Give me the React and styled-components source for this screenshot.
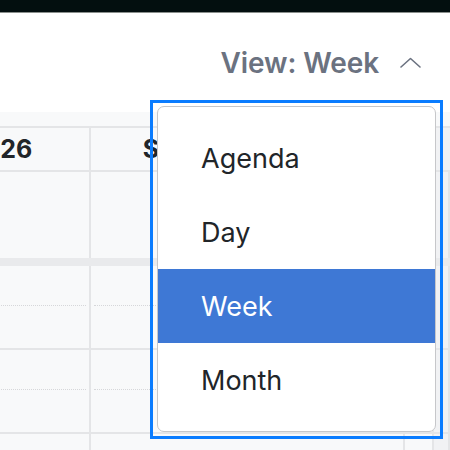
import React from "react";
import styled, { createGlobalStyle } from "styled-components";

const GlobalStyle = createGlobalStyle`
  html, body { margin: 0; padding: 0; }
  body {
    width: 450px;
    height: 450px;
    overflow: hidden;
    background: #ffffff;
    font-family: Inter, "Noto Sans", "Liberation Sans", sans-serif;
  }
  * { box-sizing: border-box; }
`;

const Page = styled.div`
  width: 450px;
  height: 450px;
  display: flex;
  flex-direction: column;
  overflow: hidden;
`;

const TopBar = styled.div`
  height: 13px;
  flex: none;
  background: #030f0f;
  border-bottom: 1px solid #8a8f8c;
`;

const Toolbar = styled.div`
  position: relative;
  height: 99px;
  flex: none;
  display: flex;
  align-items: center;
  justify-content: flex-end;
  padding-right: 29px;
  background: #ffffff;
  z-index: 2;
`;

const ViewButton = styled.button`
  display: flex;
  align-items: center;
  gap: 21px;
  border: 0;
  background: transparent;
  padding: 0;
  font-family: inherit;
  font-size: 28px;
  font-weight: 600;
  color: #6b7280;
  letter-spacing: -0.1px;
  cursor: pointer;
`;

const MenuFrame = styled.div`
  position: absolute;
  top: 87px;
  right: 7px;
  width: 293px;
  padding: 3px 4px 4px 4px;
  border: 3px solid #0a7cff;
`;

const Menu = styled.ul`
  list-style: none;
  margin: 0;
  padding: 14px 0;
  background: #ffffff;
  border: 1px solid #c6c7ca;
  border-radius: 7px;
`;

const MenuItem = styled.li`
  height: 74px;
  display: flex;
  align-items: center;
  padding-left: 43px;
  font-size: 27px;
  font-weight: 400;
  color: ${(p) => (p.$active ? "#ffffff" : "#212529")};
  background: ${(p) => (p.$active ? "#3e78d5" : "transparent")};
`;

const Calendar = styled.div`
  flex: 1;
  background: #f8f9fa;
  padding-top: 14px;
  overflow: hidden;
`;

const Row = styled.div`
  display: grid;
  grid-template-columns: 314px 314px 29px 16px;
  margin-left: -223px;
  border-bottom: ${(p) => p.$line || "2px solid #e4e5e7"};
`;

const HeaderRow = styled(Row)`
  border-top: 2px solid #e4e5e7;
`;

const Cell = styled.div`
  border-right: 2px solid #e4e5e7;
  height: ${(p) => p.$h}px;
  padding: 0 3px;
  background: ${(p) => (p.$strip ? "#f1f2f4" : "transparent")};
`;

const HeadCell = styled(Cell)`
  display: flex;
  align-items: center;
  justify-content: center;
  padding-left: 14px;
  font-size: 25px;
  font-weight: 700;
  color: #212529;
  white-space: nowrap;
  overflow: hidden;
`;

const HalfSlot = styled.div`
  height: 40px;
  border-bottom: 1px dotted #d6d7da;
`;

const Chevron = () => (
  <svg width="21" height="11" viewBox="0 0 21 11" fill="none">
    <path d="M1 10 L10.5 1.5 L20 10" stroke="#6b7280" strokeWidth="1.6" strokeLinecap="round" strokeLinejoin="round" />
  </svg>
);

const days = ["Friday, June 26", "Saturday, June 27"];

export default function App() {
  const views = ["Agenda", "Day", "Week", "Month"];
  return (
    <>
      <GlobalStyle />
      <Page>
        <TopBar />
        <Toolbar>
          <ViewButton>
            View: Week
            <Chevron />
          </ViewButton>
          <MenuFrame>
            <Menu>
              {views.map((v) => (
                <MenuItem key={v} $active={v === "Week"}>
                  {v}
                </MenuItem>
              ))}
            </Menu>
          </MenuFrame>
        </Toolbar>
        <Calendar>
          <HeaderRow>
            {days.map((d) => (
              <HeadCell key={d} $h={42}>{d}</HeadCell>
            ))}
            <HeadCell $h={42} />
            <HeadCell $h={42} $strip />
          </HeaderRow>
          <Row $line="8px solid #e9eaec">
            <Cell $h={86} />
            <Cell $h={86} />
            <Cell $h={86} />
            <Cell $h={86} $strip />
          </Row>
          {[0, 1, 2].map((r) => (
            <Row key={r}>
              <Cell $h={82}><HalfSlot /></Cell>
              <Cell $h={82}><HalfSlot /></Cell>
              <Cell $h={82}><HalfSlot /></Cell>
              <Cell $h={82} $strip />
            </Row>
          ))}
        </Calendar>
      </Page>
    </>
  );
}
